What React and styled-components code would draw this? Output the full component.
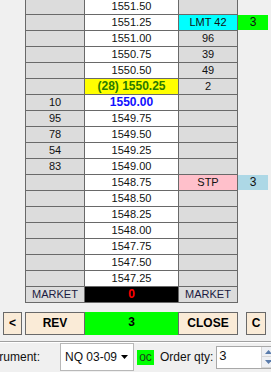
import React from 'react'
import styled, { createGlobalStyle } from 'styled-components'

const GlobalStyle = createGlobalStyle`
  html, body {
    margin: 0;
    padding: 0;
    background: #f0f0f0;
    overflow: hidden;
  }
  body {
    font-family: "Liberation Sans", Arial, sans-serif;
    font-size: 11px;
    color: #111;
  }
`

const rows = [
  { price: '1551.50' },
  { price: '1551.25', ask: 'LMT 42', askBg: '#00ffff', side: '3', sideBg: '#00ff00' },
  { price: '1551.00', ask: '96' },
  { price: '1550.75', ask: '39' },
  { price: '1550.50', ask: '49' },
  { price: '(28) 1550.25', ask: '2', last: true },
  { price: '1550.00', bid: '10', current: true },
  { price: '1549.75', bid: '95' },
  { price: '1549.50', bid: '78' },
  { price: '1549.25', bid: '54' },
  { price: '1549.00', bid: '83' },
  { price: '1548.75', ask: 'STP', askBg: '#ffc0cb', side: '3', sideBg: '#add8e6' },
  { price: '1548.50' },
  { price: '1548.25' },
  { price: '1548.00' },
  { price: '1547.75' },
  { price: '1547.50' },
  { price: '1547.25' },
]

const Page = styled.div`
  width: 271px;
  height: 372px;
  overflow: hidden;
  display: flex;
  flex-direction: column;
`

const Ladder = styled.div`
  display: flex;
  align-items: flex-start;
  margin-top: -2px;
  padding-left: 25px;
`

const Grid = styled.div`
  display: grid;
  grid-template-columns: 58px 93px 58px;
  grid-auto-rows: 15px;
  gap: 1px;
  background: #696969;
  border: 1px solid #696969;
`

const Cell = styled.div`
  background: ${p => p.$bg || '#dcdcdc'};
  color: ${p => p.$color || '#111'};
  font-weight: ${p => (p.$bold ? 'bold' : 'normal')};
  font-size: ${p => (p.$bold ? '12px' : '11px')};
  line-height: 15px;
  text-align: center;
  white-space: nowrap;
  overflow: hidden;
`

const Side = styled.div`
  display: grid;
  grid-template-columns: 30px;
  grid-auto-rows: 15px;
  row-gap: 1px;
  padding-top: 1px;
`

const SideCell = styled.div`
  background: ${p => p.$bg || 'transparent'};
  font-size: 12px;
  line-height: 15px;
  text-align: center;
`

const ButtonRow = styled.div`
  display: flex;
  margin-top: 9px;
  padding-left: 3px;
  height: 23px;
`

const Btn = styled.div`
  box-sizing: border-box;
  width: ${p => p.$w}px;
  height: 23px;
  margin-left: ${p => p.$ml || 0}px;
  background: ${p => p.$bg || '#faebd7'};
  border: ${p => (p.$flat ? 'none' : '1px solid #696969')};
  font-weight: bold;
  font-size: 12px;
  line-height: 21px;
  text-align: center;
  color: #000;
`

const Separator = styled.div`
  margin-top: 6px;
  height: 1px;
  background: #a0a0a0;
  border-bottom: 1px solid #ffffff;
`

const Toolbar = styled.div`
  display: flex;
  align-items: center;
  height: 32px;
  white-space: nowrap;
  font-size: 11px;
`

const Label = styled.span`
  margin-left: ${p => p.$ml || 0}px;
  width: ${p => (p.$w ? p.$w + 'px' : 'auto')};
  flex-shrink: 0;
  color: #111;
  font-size: 12px;
`

const Combo = styled.div`
  box-sizing: border-box;
  width: 74px;
  height: 28px;
  flex-shrink: 0;
  display: flex;
  align-items: center;
  justify-content: space-between;
  padding: 0 5px 0 4px;
  background: #fff;
  border: 1px solid #b8b8b8;
  font-size: 12px;
`

const OcBox = styled.div`
  width: 17px;
  height: 15px;
  margin-left: 3px;
  flex-shrink: 0;
  background: #00ff00;
  font-size: 12px;
  line-height: 14px;
  text-align: center;
  color: #1c3c1c;
`

const Numeric = styled.div`
  box-sizing: border-box;
  width: 60px;
  height: 23px;
  margin-left: 3px;
  flex-shrink: 0;
  display: flex;
  background: #fff;
  border: 1px solid #a8a8a8;
`

const NumValue = styled.div`
  flex: 1;
  padding-left: 2px;
  font-size: 13px;
  line-height: 18px;
`

const Spin = styled.div`
  width: 13px;
  display: flex;
  flex-direction: column;
  border-left: 1px solid #d6d6d6;
`

const SpinHalf = styled.div`
  flex: 1;
  display: flex;
  align-items: center;
  justify-content: center;
  background: #eef0f4;
  border-bottom: 1px solid #d6d6d6;
`

const Arrow = ({ up, color = '#5a7cac' }) => (
  <svg width="7" height="4" viewBox="0 0 7 4">
    <polygon points={up ? '0,4 7,4 3.5,0' : '0,0 7,0 3.5,4'} fill={color} />
  </svg>
)

export default function App() {
  return (
    <Page>
      <GlobalStyle />
      <Ladder>
        <Grid>
          {rows.map(r => (
            <React.Fragment key={r.price}>
              <Cell>{r.bid}</Cell>
              <Cell
                $bg={r.last ? '#ffff00' : '#ffffff'}
                $bold={r.last || r.current}
                $color={r.last ? '#2b7a00' : r.current ? '#1010ff' : undefined}
              >
                {r.price}
              </Cell>
              <Cell $bg={r.askBg}>{r.ask}</Cell>
            </React.Fragment>
          ))}
          <Cell $color="#1a1a40">MARKET</Cell>
          <Cell $bg="#000000" $color="#ff0000" $bold>0</Cell>
          <Cell $color="#1a1a40">MARKET</Cell>
        </Grid>
        <Side>
          {rows.map(r => (
            <SideCell key={r.price} $bg={r.sideBg}>{r.side}</SideCell>
          ))}
        </Side>
      </Ladder>

      <ButtonRow>
        <Btn $w={19}>&lt;</Btn>
        <Btn $w={60} $ml={3}>REV</Btn>
        <Btn $w={93} $bg="#00ff00" $flat>3</Btn>
        <Btn $w={60}>CLOSE</Btn>
        <Btn $w={20} $ml={8}>C</Btn>
      </ButtonRow>

      <Separator />

      <Toolbar>
        <Label $ml={-20} $w={80}>Instrument:</Label>
        <Combo>
          <span>NQ 03-09</span>
          <Arrow color="#000" />
        </Combo>
        <OcBox>oc</OcBox>
        <Label $ml={6}>Order qty:</Label>
        <Numeric>
          <NumValue>3</NumValue>
          <Spin>
            <SpinHalf><Arrow up /></SpinHalf>
            <SpinHalf><Arrow /></SpinHalf>
          </Spin>
        </Numeric>
      </Toolbar>
    </Page>
  )
}
